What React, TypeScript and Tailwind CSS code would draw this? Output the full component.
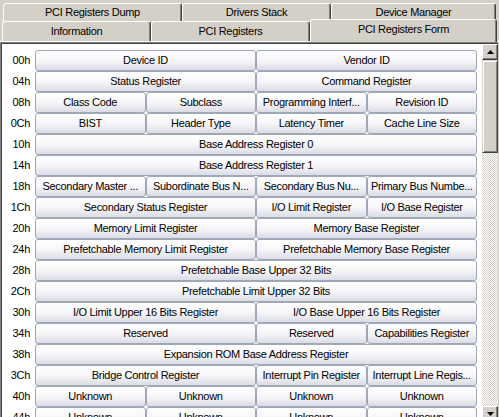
import React from "react";

type Cell = [string, number];
type Row = [string, Cell[]];

const rows: Row[] = [
  ["00h", [["Device ID", 2], ["Vendor ID", 2]]],
  ["04h", [["Status Register", 2], ["Command Register", 2]]],
  ["08h", [["Class Code", 1], ["Subclass", 1], ["Programming Interf...", 1], ["Revision ID", 1]]],
  ["0Ch", [["BIST", 1], ["Header Type", 1], ["Latency Timer", 1], ["Cache Line Size", 1]]],
  ["10h", [["Base Address Register 0", 4]]],
  ["14h", [["Base Address Register 1", 4]]],
  ["18h", [["Secondary Master ...", 1], ["Subordinate Bus N...", 1], ["Secondary Bus Nu...", 1], ["Primary Bus Numbe...", 1]]],
  ["1Ch", [["Secondary Status Register", 2], ["I/O Limit Register", 1], ["I/O Base Register", 1]]],
  ["20h", [["Memory Limit Register", 2], ["Memory Base Register", 2]]],
  ["24h", [["Prefetchable Memory Limit Register", 2], ["Prefetchable Memory Base Register", 2]]],
  ["28h", [["Prefetchable Base Upper 32 Bits", 4]]],
  ["2Ch", [["Prefetchable Limit Upper 32 Bits", 4]]],
  ["30h", [["I/O Limit Upper 16 Bits Register", 2], ["I/O Base Upper 16 Bits Register", 2]]],
  ["34h", [["Reserved", 2], ["Reserved", 1], ["Capabilities Register", 1]]],
  ["38h", [["Expansion ROM Base Address Register", 4]]],
  ["3Ch", [["Bridge Control Register", 2], ["Interrupt Pin Register", 1], ["Interrupt Line Regis...", 1]]],
  ["40h", [["Unknown", 1], ["Unknown", 1], ["Unknown", 1], ["Unknown", 1]]],
  ["44h", [["Unknown", 1], ["Unknown", 1], ["Unknown", 1], ["Unknown", 1]]],
];

const spanClass: Record<number, string> = {
  1: "col-span-1",
  2: "col-span-2",
  4: "col-span-4",
};

function Tab({ label, w, selected }: { label: string; w: string; selected?: boolean }) {
  return (
    <div
      className={
        "flex items-center justify-center rounded-t-[3px] border-t border-l border-r border-t-white border-l-white border-r-[#404040] bg-[#d4d0c8] shadow-[inset_-1px_0_0_#808080] " +
        w +
        (selected ? " relative z-10 -mt-[2px] h-[23px] pb-[3px]" : " h-full")
      }
    >
      <span className="whitespace-nowrap">{label}</span>
    </div>
  );
}

function ScrollBtn({ up }: { up?: boolean }) {
  return (
    <div className="flex h-[16px] w-[16px] shrink-0 items-center justify-center border border-t-white border-l-white border-r-[#404040] border-b-[#404040] bg-[#d4d0c8] shadow-[inset_-1px_-1px_0_#808080]">
      <svg width="7" height="4" viewBox="0 0 7 4">
        {up ? <polygon points="3.5,0 7,4 0,4" fill="#000" /> : <polygon points="0,0 7,0 3.5,4" fill="#000" />}
      </svg>
    </div>
  );
}

export default function App() {
  return (
    <div
      className="flex h-[417px] w-[499px] flex-col overflow-hidden bg-[#d4d0c8] text-[11px] tracking-[-0.3px] text-black"
      style={{ fontFamily: '"Liberation Sans", Arial, sans-serif' }}
    >
      {/* Tabs */}
      <div className="flex shrink-0 flex-col">
        <div className="ml-[3px] mt-[3px] flex h-[18px]">
          <Tab label="PCI Registers Dump" w="w-[179px]" />
          <Tab label="Drivers Stack" w="w-[149px]" />
          <Tab label="Device Manager" w="w-[165px]" />
        </div>
        <div className="ml-[2px] flex h-[20px] items-start">
          <Tab label="Information" w="w-[149px]" />
          <Tab label="PCI Registers" w="w-[159px]" />
          <Tab label="PCI Registers Form" w="w-[187px]" selected />
        </div>
      </div>

      {/* Panel */}
      <div className="h-[381px] shrink-0 border-t border-t-white pr-px">
        <div className="flex h-full border-t border-l border-[#808080]">
          <div className="flex h-full min-w-0 flex-1 border-t border-l border-[#404040] bg-white">
            <div className="flex min-w-0 flex-1 flex-col overflow-hidden pt-[6px] pr-[5px]">
              {rows.map(([label, cells], i) => (
                <div key={i} className="flex h-[21px] shrink-0">
                  <div className="flex w-[33px] shrink-0 items-center justify-end pr-[5px]">{label}</div>
                  <div className="grid flex-1 grid-cols-4">
                    {cells.map(([text, span], j) => (
                      <div
                        key={j}
                        className={
                          "flex h-[21px] items-center justify-center overflow-hidden whitespace-nowrap rounded-[3px] border border-[#9ea8b8] bg-linear-to-b from-white via-[#f6f6f9] to-[#dcdce6] " +
                          spanClass[span]
                        }
                      >
                        {text}
                      </div>
                    ))}
                  </div>
                </div>
              ))}
            </div>
            <div className="flex w-[16px] shrink-0 flex-col bg-[#d4d0c8]">
              <ScrollBtn up />
              <div className="h-[93px] shrink-0 border border-t-[#d4d0c8] border-l-[#d4d0c8] border-r-[#404040] border-b-[#404040] bg-[#d4d0c8] shadow-[inset_1px_1px_0_#ffffff,inset_-1px_-1px_0_#808080]" />
              <div className="flex-1 bg-[repeating-conic-gradient(#d4d0c8_0%_25%,#ffffff_0%_50%)] bg-[length:2px_2px]" />
              <ScrollBtn />
            </div>
          </div>
        </div>
      </div>
    </div>
  );
}
